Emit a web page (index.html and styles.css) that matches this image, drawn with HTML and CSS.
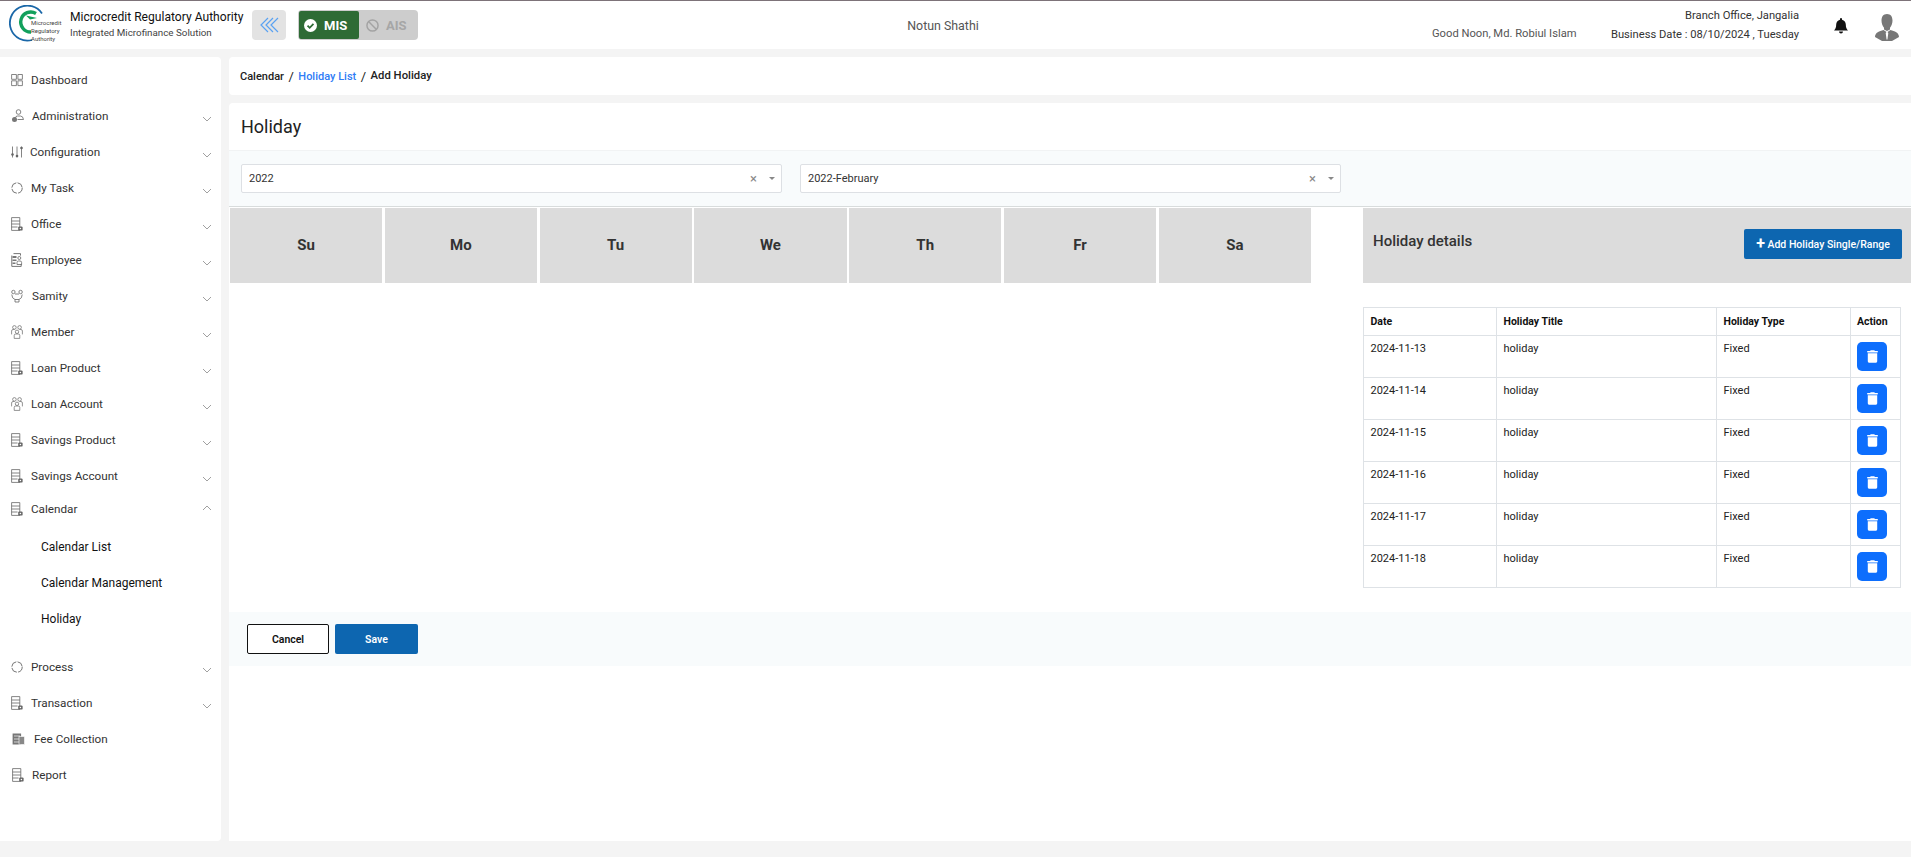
FILE: index.html
```html
<!DOCTYPE html>
<html lang="en">
<head>
    <meta charset="UTF-8">
    <meta name="viewport" content="width=device-width, initial-scale=1.0">
    <title>Holiday - Integrated Microfinance Solution</title>
    <link rel="stylesheet" href="styles.css">
</head>
<body>
    <svg class="sprites" width="0" height="0">
        <symbol id="ic-doc" viewBox="0 0 12 14">
            <path d="M.6.6h8.200v12.800H.6zM.6 4h8.200M.6 7h8.200M.6 10h6" fill="none" stroke="#666" stroke-width=".8"/>
            <rect x="7.200" y="9.400" width="4.400" height="4.200" rx="1.200" fill="#666"/>
            <circle cx="9.400" cy="11.500" r=".8" fill="#fff"/>
        </symbol>
        <symbol id="ic-employee" viewBox="0 0 12 14">
            <path d="M2.500.6h7v2M.8 2.500v10.900h9.400V11" fill="none" stroke="#666" stroke-width=".9"/>
            <path d="M1.500 3h4v2h-4zM1.500 6.500h4v1.500h-4zM1.500 9.500h3v1.500h-3z" fill="#777"/>
            <circle cx="8.300" cy="5" r="1.500" fill="none" stroke="#666" stroke-width=".8"/>
            <path d="M6 11.500V9.500q0-1.500 1.500-1.500h1.600q1.500 0 1.500 1.500v2z" fill="none" stroke="#666" stroke-width=".8"/>
        </symbol>
        <symbol id="ic-people" viewBox="0 0 12 14">
            <g fill="none" stroke="#666" stroke-width=".7">
                <circle cx="3.400" cy="2.400" r="1.800"/>
                <circle cx="8.600" cy="2.400" r="1.800"/>
                <circle cx="6" cy="6.800" r="1.700"/>
                <path d="M.6 9.400V6q0-1.500 1.500-1.500h1.400M11.400 9.400V6q0-1.500-1.500-1.500H8.500M3.200 13.400V10.500q0-1.500 1.500-1.500h2.600q1.500 0 1.500 1.500v2.900z"/>
            </g>
        </symbol>
        <symbol id="ic-ring" viewBox="0 0 12 12">
            <circle cx="6" cy="6" r="5.200" fill="none" stroke="#666" stroke-width=".9" stroke-dasharray="6.800 1.360"/>
        </symbol>
        <symbol id="ic-chevron" viewBox="0 0 10 6">
            <path d="M1 1l4 4 4-4" fill="none" stroke="#888" stroke-width=".8"/>
        </symbol>
        <symbol id="ic-trash" viewBox="0 0 448 512">
            <path fill="#fff" d="M135 18C140 7 151 0 163 0h122c12 0 23 7 28 18l7 14h96c18 0 32 14 32 32s-14 32-32 32H32C14 96 0 82 0 64s14-32 32-32h96zM32 128h384v320c0 35-29 64-64 64H96c-35 0-64-29-64-64z"/>
        </symbol>
    </svg>

    <header class="topbar">
        <svg class="logo" viewBox="0 0 54 40">
            <path d="M33 8.500A17.500 17.500 0 1 0 23 35" fill="none" stroke="#1a67a8" stroke-width="1.800"/>
            <path d="M27 8.500A10 10 0 1 0 22 27" fill="none" stroke="#12a05c" stroke-width="3.400"/>
            <path d="M17 10.500l11 2.500-7 1.500z" fill="#12a05c"/>
            <text class="logo-text" x="22" y="20">Microcredit</text>
            <text class="logo-text" x="22" y="28">Regulatory</text>
            <text class="logo-text" x="22" y="36">Authority</text>
        </svg>
        <div class="brand">
            <div class="brand-name">Microcredit Regulatory Authority</div>
            <div class="brand-sub">Integrated Microfinance Solution</div>
        </div>
        <button class="collapse-btn">
            <svg width="20" height="16" viewBox="0 0 20 16">
                <path d="M9 1L2 8l7 7M14 1L7 8l7 7M19 1l-7 7 7 7" fill="none" stroke="#5aa2f2" stroke-width="1.200"/>
            </svg>
        </button>
        <div class="module-switch">
            <div class="module active">
                <svg width="13" height="13" viewBox="0 0 14 14">
                    <circle cx="7" cy="7" r="7" fill="#fff"/>
                    <path d="M3.800 7.200l2.300 2.300L10.200 5.200" fill="none" stroke="#2e6b35" stroke-width="1.900"/>
                </svg>
                MIS
            </div>
            <div class="module">
                <svg width="13" height="13" viewBox="0 0 14 14">
                    <circle cx="7" cy="7" r="6" fill="none" stroke="#a3a3a3" stroke-width="1.600"/>
                    <path d="M3 3l8 8" stroke="#a3a3a3" stroke-width="1.600"/>
                </svg>
                AIS
            </div>
        </div>
        <div class="org-name">Notun Shathi</div>
        <div class="greeting">Good Noon, Md. Robiul Islam</div>
        <div class="branch-info">
            <div>Branch Office, Jangalia</div>
            <div>Business Date : 08/10/2024 , Tuesday</div>
        </div>
        <svg class="bell" width="14" height="16" viewBox="0 0 14 16">
            <path d="M7 0a1 1 0 0 1 1 1v.7c2.400.5 3.800 2.500 3.800 4.800 0 3.500 1 4.500 2.200 6.100H0C1.200 11 2.200 10 2.200 6.500c0-2.300 1.400-4.300 3.800-4.800V1a1 1 0 0 1 1-1z" fill="#111"/>
            <path d="M5 13.600h4a2 2 0 0 1-4 0z" fill="#111"/>
        </svg>
        <svg class="avatar" width="24" height="27" viewBox="0 0 24 27">
            <path d="M12 0c3.800 0 5.500 2.800 5.500 6.500 0 2.800-1 5.500-2.500 7.200v1.800L12 17l-3-1.500v-1.800C7.500 12 6.500 9.300 6.500 6.500 6.500 2.800 8.200 0 12 0z" fill="#777"/>
            <path d="M8.500 16l3 2-.8 1 .8 6 .5 1 .5-1 .8-6-.8-1 3-2c4 1 8.500 2.500 8.500 7l-7 4H7l-7-4c0-4.500 4.500-6 8.500-7z" fill="#777"/>
        </svg>
    </header>

    <div class="layout">
        <nav class="sidebar">
            <a class="nav-item"><svg class="nav-icon" viewBox="0 0 12 14"><path d="M.6 1.500h4.800v4.800H.6zM6.900 1.500h4.500v4.800H6.900zM.6 7.800h4.800v4.800H.6zM6.900 7.800h4.500v4.800H6.900z" fill="none" stroke="#666" stroke-width=".8"/></svg><span>Dashboard</span></a>
            <a class="nav-item"><svg class="nav-icon nav-icon-wide" viewBox="0 0 13 14"><g fill="none" stroke="#666" stroke-width=".8"><circle cx="7.500" cy="3" r="2.300"/><path d="M4.500 9q0-2 2-2h3q2.500 0 3 3.500h-6"/></g><circle cx="3.500" cy="10.500" r="2.500" fill="#777"/></svg><span>Administration</span><svg class="chevron"><use href="#ic-chevron"/></svg></a>
            <a class="nav-item"><svg class="nav-icon" viewBox="0 0 12 14"><path d="M1.500 1.500v11M6 1.500v11M10.500 1.500v11" stroke="#666" stroke-width=".8"/><circle cx="1.500" cy="9.500" r="1.300" fill="#666"/><circle cx="6" cy="11" r="1.300" fill="#666"/><circle cx="10.500" cy="3" r="1.300" fill="#666"/></svg><span class="label-tight">Configuration</span><svg class="chevron"><use href="#ic-chevron"/></svg></a>
            <a class="nav-item"><svg class="nav-icon"><use href="#ic-ring"/></svg><span>My Task</span><svg class="chevron"><use href="#ic-chevron"/></svg></a>
            <a class="nav-item"><svg class="nav-icon"><use href="#ic-doc"/></svg><span>Office</span><svg class="chevron"><use href="#ic-chevron"/></svg></a>
            <a class="nav-item"><svg class="nav-icon"><use href="#ic-employee"/></svg><span>Employee</span><svg class="chevron"><use href="#ic-chevron"/></svg></a>
            <a class="nav-item"><svg class="nav-icon" viewBox="0 0 12 14"><g fill="none" stroke="#666" stroke-width=".8"><circle cx="2.400" cy="3" r="1.700"/><circle cx="9.600" cy="3" r="1.700"/><path d="M.8 5.500q0 4 3.200 5h4q3.200-1 3.200-5M4 10.500v2.500h4v-2.500M4 5h4"/></g></svg><span class="label-samity">Samity</span><svg class="chevron"><use href="#ic-chevron"/></svg></a>
            <a class="nav-item"><svg class="nav-icon"><use href="#ic-people"/></svg><span>Member</span><svg class="chevron"><use href="#ic-chevron"/></svg></a>
            <a class="nav-item"><svg class="nav-icon"><use href="#ic-doc"/></svg><span>Loan Product</span><svg class="chevron"><use href="#ic-chevron"/></svg></a>
            <a class="nav-item"><svg class="nav-icon"><use href="#ic-people"/></svg><span>Loan Account</span><svg class="chevron"><use href="#ic-chevron"/></svg></a>
            <a class="nav-item"><svg class="nav-icon"><use href="#ic-doc"/></svg><span>Savings Product</span><svg class="chevron"><use href="#ic-chevron"/></svg></a>
            <a class="nav-item"><svg class="nav-icon"><use href="#ic-doc"/></svg><span>Savings Account</span><svg class="chevron"><use href="#ic-chevron"/></svg></a>
            <a class="nav-item nav-open"><svg class="nav-icon"><use href="#ic-doc"/></svg><span>Calendar</span><svg class="chevron chevron-up"><use href="#ic-chevron"/></svg></a>
            <div class="submenu">
                <a class="sub-item">Calendar List</a>
                <a class="sub-item">Calendar Management</a>
                <a class="sub-item">Holiday</a>
            </div>
            <a class="nav-item"><svg class="nav-icon"><use href="#ic-ring"/></svg><span>Process</span><svg class="chevron"><use href="#ic-chevron"/></svg></a>
            <a class="nav-item"><svg class="nav-icon"><use href="#ic-doc"/></svg><span>Transaction</span><svg class="chevron"><use href="#ic-chevron"/></svg></a>
            <a class="nav-item nav-fee"><svg class="nav-icon" viewBox="0 0 13 14"><path d="M.6 1.500h8.500v11H.6z" fill="#777"/><path d="M2 4h6M2 7h6M2 10h5" stroke="#ddd" stroke-width=".9"/><rect x="7" y="4.500" width="5.500" height="8" fill="#888" stroke="#fff" stroke-width=".6"/></svg><span>Fee Collection</span></a>
            <a class="nav-item nav-report"><svg class="nav-icon"><use href="#ic-doc"/></svg><span>Report</span></a>
        </nav>

        <main class="content">
            <div class="breadcrumb">
                <span>Calendar</span>
                <span class="sep">/</span>
                <a class="crumb-link">Holiday List</a>
                <span class="sep">/</span>
                <span class="crumb-current">Add Holiday</span>
            </div>

            <section class="card">
                <h1 class="card-title">Holiday</h1>

                <div class="filters">
                    <div class="select">
                        <span>2022</span>
                        <span class="select-clear">×</span>
                        <span class="select-caret"></span>
                    </div>
                    <div class="select">
                        <span>2022-February</span>
                        <span class="select-clear">×</span>
                        <span class="select-caret"></span>
                    </div>
                </div>

                <div class="calendar-area">
                    <div class="week-head">
                        <div class="day">Su</div>
                        <div class="day">Mo</div>
                        <div class="day">Tu</div>
                        <div class="day">We</div>
                        <div class="day">Th</div>
                        <div class="day">Fr</div>
                        <div class="day">Sa</div>
                    </div>

                    <div class="details">
                        <div class="details-head">
                            <h2>Holiday details</h2>
                            <button class="btn-add"><span class="plus">+</span> Add Holiday Single/Range</button>
                        </div>
                        <table class="holiday-table">
                            <thead>
                                <tr>
                                    <th class="col-date">Date</th>
                                    <th class="col-title">Holiday Title</th>
                                    <th class="col-type">Holiday Type</th>
                                    <th>Action</th>
                                </tr>
                            </thead>
                            <tbody>
                                <tr><td>2024-11-13</td><td>holiday</td><td>Fixed</td><td><button class="btn-delete"><svg width="11" height="13"><use href="#ic-trash"/></svg></button></td></tr>
                                <tr><td>2024-11-14</td><td>holiday</td><td>Fixed</td><td><button class="btn-delete"><svg width="11" height="13"><use href="#ic-trash"/></svg></button></td></tr>
                                <tr><td>2024-11-15</td><td>holiday</td><td>Fixed</td><td><button class="btn-delete"><svg width="11" height="13"><use href="#ic-trash"/></svg></button></td></tr>
                                <tr><td>2024-11-16</td><td>holiday</td><td>Fixed</td><td><button class="btn-delete"><svg width="11" height="13"><use href="#ic-trash"/></svg></button></td></tr>
                                <tr><td>2024-11-17</td><td>holiday</td><td>Fixed</td><td><button class="btn-delete"><svg width="11" height="13"><use href="#ic-trash"/></svg></button></td></tr>
                                <tr><td>2024-11-18</td><td>holiday</td><td>Fixed</td><td><button class="btn-delete"><svg width="11" height="13"><use href="#ic-trash"/></svg></button></td></tr>
                            </tbody>
                        </table>
                    </div>
                </div>

                <div class="form-actions">
                    <button class="btn btn-cancel">Cancel</button>
                    <button class="btn btn-save">Save</button>
                </div>
            </section>
        </main>
    </div>
</body>
</html>
```

FILE: styles.css
```css
:root {
    --blue: #0d66b0;
    --grey-cell: #dcdcdc;
    --line: #dee2e6;
    --page: #f4f4f4;
    --panel: #f8fbfc;
    --text: #212529;
}

* {
    margin: 0;
    padding: 0;
    box-sizing: border-box;
}

body {
    background: var(--page);
    color: var(--text);
    font-family: Roboto, "Liberation Sans", sans-serif;
    font-size: 12px;
    height: 857px;
    overflow: hidden;
}

.sprites {
    position: absolute;
}

/* top bar */
.topbar {
    height: 49px;
    background: #fff;
    border-top: 1px solid #7d7379;
    display: flex;
    align-items: center;
    padding-left: 9px;
}

.logo {
    width: 54px;
    height: 40px;
    flex: none;
}

.logo-text {
    font-size: 6px;
    fill: #444;
}

.brand {
    margin-left: 7px;
    width: 182px;
    white-space: nowrap;
}

.brand-name {
    font-size: 12.100px;
    color: #111;
    margin-bottom: 3px;
    margin-top: -2px;
}

.brand-sub {
    font-size: 9.800px;
    color: #444;
}

.collapse-btn {
    width: 34px;
    height: 30px;
    background: #e3e3e3;
    border: 0;
    border-radius: 4px;
    display: flex;
    align-items: center;
    justify-content: center;
}

.module-switch {
    width: 120px;
    height: 30px;
    margin-left: 12px;
    padding: 1px;
    background: #cdcdcd;
    border-radius: 4px;
    display: flex;
}

.module {
    flex: 1;
    display: flex;
    align-items: center;
    gap: 7px;
    padding-left: 7px;
    font-size: 13px;
    font-weight: 700;
    color: #a6a6a6;
}

.module.active {
    flex: none;
    width: 60px;
    background: #2e6b35;
    color: #fff;
    border-radius: 2px;
    padding-left: 5px;
}

.org-name {
    flex: 1;
    text-align: center;
    font-size: 12.400px;
    color: #555;
    padding-left: 36px;
    margin-top: 1px;
}

.greeting {
    font-size: 11.200px;
    color: #555;
    margin-top: 16px;
    width: 178px;
    white-space: nowrap;
}

.branch-info {
    width: 189px;
    text-align: right;
    font-size: 11.200px;
    line-height: 19px;
    color: #333;
    white-space: nowrap;
}

.bell {
    margin-left: 35px;
    margin-top: 2px;
}

.avatar {
    margin-left: 27px;
    margin-right: 12px;
    margin-top: 4px;
}

/* layout */
.layout {
    display: flex;
    gap: 8px;
    margin-top: 8px;
}

.sidebar {
    width: 221px;
    height: 784px;
    background: #fff;
    border-radius: 0 4px 4px 0;
    padding-top: 5px;
    flex: none;
}

.nav-item {
    height: 36px;
    display: flex;
    align-items: center;
    padding-left: 11px;
    color: #333;
    font-size: 11.700px;
    font-weight: 400;
}

.nav-icon {
    width: 12px;
    height: 14px;
    margin-right: 8px;
    flex: none;
}

.nav-icon-wide {
    width: 13px;
}

.label-tight {
    margin-left: -1px;
}

.label-samity {
    margin-left: 1px;
}

.chevron {
    width: 10px;
    height: 6px;
    margin-left: auto;
    margin-right: 9px;
    margin-top: 5px;
}

.chevron-up {
    transform: rotate(180deg);
    margin-top: -2px;
}

.nav-open {
    height: 30px;
}

.submenu {
    padding: 5px 0 12px 41px;
}

.sub-item {
    display: flex;
    align-items: center;
    height: 36px;
    font-size: 12px;
    font-weight: 400;
    color: #111;
}

.nav-fee .nav-icon {
    width: 13px;
    margin-right: 9px;
    margin-left: 1px;
}

.nav-report .nav-icon {
    margin-left: 1px;
}

/* main */
.content {
    flex: 1;
    min-width: 0;
}

.breadcrumb {
    height: 38px;
    background: #fff;
    display: flex;
    align-items: center;
    gap: 4.500px;
    padding-left: 11px;
    font-size: 11px;
    font-weight: 500;
    color: #222;
    border-radius: 4px 0 0 4px;
}

.breadcrumb .sep {
    font-size: 13px;
    font-weight: 400;
}

.crumb-link {
    color: #2f7cf6;
    font-weight: 500;
}

.crumb-current {
    font-size: 11.300px;
    margin-top: -2px;
}

.card {
    height: 738px;
    margin-top: 8px;
    background: #fff;
    border-radius: 4px 0 0 0;
}

.card-title {
    height: 48px;
    padding-left: 12px;
    font-size: 18px;
    font-weight: 400;
    line-height: 47px;
    color: #222;
    border-bottom: 1px solid #f1f3f4;
}

.filters {
    height: 56px;
    padding: 13px 0 0 12px;
    background: var(--panel);
    border-bottom: 1px solid #d8dcdc;
    display: flex;
    gap: 18px;
}

.select {
    width: 541px;
    height: 29px;
    background: #fff;
    border: 1px solid #dde0e4;
    border-radius: 2px;
    padding: 0 6px 0 7px;
    display: flex;
    align-items: center;
    font-size: 11px;
    color: #333;
}

.select-clear {
    margin-left: auto;
    font-size: 13px;
    color: #888;
    margin-right: 12px;
}

.select-caret {
    width: 0;
    height: 0;
    border: 3px solid transparent;
    border-top: 3px solid #888;
    margin-top: 3px;
}

.calendar-area {
    height: 405px;
    padding: 1px 0 0 1px;
    display: flex;
}

.week-head {
    width: 1081px;
    height: 75px;
    display: grid;
    grid-template-columns: repeat(7, 152.200px);
    column-gap: 2.600px;
    flex: none;
}

.day {
    background: var(--grey-cell);
    display: flex;
    align-items: center;
    justify-content: center;
    padding-bottom: 2px;
    font-size: 15px;
    font-weight: 700;
    color: #333;
}

.details {
    margin-left: 52px;
    flex: 1;
}

.details-head {
    height: 75px;
    background: var(--grey-cell);
    padding: 21px 9px 0 10px;
    display: flex;
    justify-content: space-between;
    align-items: flex-start;
}

.details-head h2 {
    font-size: 15px;
    font-weight: 500;
    color: #333;
    margin-top: 3px;
}

.btn-add {
    width: 158px;
    height: 30px;
    background: var(--blue);
    border: 0;
    border-radius: 2px;
    color: #fff;
    font-family: inherit;
    font-size: 10.500px;
    font-weight: 500;
}

.plus {
    font-size: 16px;
    font-weight: 700;
    line-height: 10px;
    vertical-align: -1px;
}

.holiday-table {
    margin-top: 24px;
    width: 538px;
    border-collapse: collapse;
    table-layout: fixed;
    font-size: 11px;
}

.holiday-table th,
.holiday-table td {
    border: 1px solid var(--line);
    padding: 0 6.500px;
    text-align: left;
    vertical-align: top;
    color: #222;
}

.holiday-table th {
    height: 28px;
    line-height: 27px;
    font-size: 10.500px;
    font-weight: 700;
    color: #111;
}

.holiday-table td {
    height: 42px;
    padding-top: 6px;
}

.col-date {
    width: 133px;
}

.col-title {
    width: 220px;
}

.col-type {
    width: 133.500px;
}

.btn-delete {
    width: 30px;
    height: 29px;
    background: #0d6efd;
    border: 0;
    border-radius: 5px;
    display: flex;
    align-items: center;
    justify-content: center;
}

.form-actions {
    height: 54px;
    background: var(--panel);
    padding: 12px 0 0 18px;
    display: flex;
    gap: 6px;
}

.btn {
    width: 82px;
    height: 30px;
    border-radius: 2px;
    font-family: inherit;
    font-size: 10.500px;
    font-weight: 600;
}

.btn-cancel {
    background: #fff;
    border: 1px solid #111;
    color: #111;
}

.btn-save {
    width: 83px;
    background: var(--blue);
    border: 0;
    color: #fff;
}
```
